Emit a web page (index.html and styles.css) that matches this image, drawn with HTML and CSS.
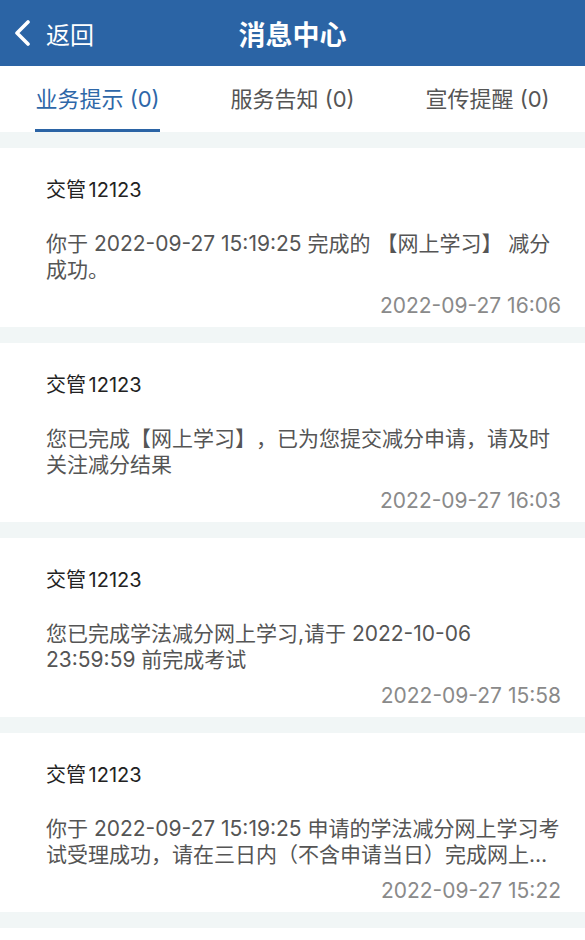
FILE: index.html
```html
<!DOCTYPE html>
<html lang="zh-CN">
<head>
    <meta charset="UTF-8">
    <meta name="viewport" content="width=device-width, initial-scale=1.0">
    <title>消息中心</title>
    <link rel="stylesheet" href="styles.css">
</head>
<body>

<!-- Barra superior -->
<header class="topbar">
    <a class="back" href="#">
        <svg class="back-icon" width="18" height="26" viewBox="0 0 18 26">
            <polyline points="15,2 4,13 15,24" fill="none" stroke="#fff" stroke-width="3.6" stroke-linecap="round" stroke-linejoin="round"/>
        </svg>
        <span>返回</span>
    </a>
    <h1 class="title">消息中心</h1>
    <div></div>
</header>

<!-- Pestañas -->
<nav class="tabs">
    <a class="tab active" href="#"><span>业务提示 (0)</span></a>
    <a class="tab" href="#"><span>服务告知 (0)</span></a>
    <a class="tab" href="#"><span>宣传提醒 (0)</span></a>
</nav>

<!-- Lista de mensajes -->
<main class="list">
    <div class="card">
        <div class="card-title">交管 12123</div>
        <div class="card-body">你于 2022-09-27 15:19:25 完成的 【网上学习】 减分成功。</div>
        <div class="card-time">2022-09-27 16:06</div>
    </div>
    <div class="card">
        <div class="card-title">交管 12123</div>
        <div class="card-body">您已完成【网上学习】，已为您提交减分申请，请及时关注减分结果</div>
        <div class="card-time">2022-09-27 16:03</div>
    </div>
    <div class="card">
        <div class="card-title">交管 12123</div>
        <div class="card-body">您已完成学法减分网上学习,请于 2022-10-06 23:59:59 前完成考试</div>
        <div class="card-time">2022-09-27 15:58</div>
    </div>
    <div class="card">
        <div class="card-title">交管 12123</div>
        <div class="card-body clamp">你于 2022-09-27 15:19:25 申请的学法减分网上学习考试受理成功，请在三日内（不含申请当日）完成网上学习考试，逾期将视为放弃</div>
        <div class="card-time">2022-09-27 15:22</div>
    </div>
</main>

</body>
</html>
```
FILE: styles.css
```css
body {
    margin: 0;
    font-family: Inter, "Noto Sans CJK SC", sans-serif;
    background-color: #fff;
    color: #222;
    text-spacing-trim: space-all;
}
a {
    text-decoration: none;
}
.topbar {
    display: grid;
    grid-template-columns: 1fr auto 1fr;
    align-items: center;
    height: 66px;
    background-color: #2b64a5;
    color: #fff;
}
.back {
    display: flex;
    align-items: center;
    gap: 15px;
    padding-left: 13px;
    color: #fff;
    font-size: 24px;
}
.back-icon {
    display: block;
}
.title {
    margin: 0;
    font-size: 27px;
    font-weight: bold;
}
.tabs {
    display: flex;
    height: 66px;
    background-color: #fff;
}
.tab {
    flex: 1;
    text-align: center;
    color: #555;
    font-size: 22px;
}
.tab span {
    display: inline-block;
    line-height: 30px;
    padding: 18px 0 15px;
    border-bottom: 3px solid transparent;
}
.tab.active {
    color: #2e67a8;
}
.tab.active span {
    border-bottom-color: #2b64a5;
}
.list {
    display: flex;
    flex-direction: column;
    gap: 16px;
    padding: 16px 0;
    background-color: #f1f6f6;
}
.card {
    background-color: #fff;
    padding: 28px 24px 8px 46px;
}
.card-title {
    font-size: 20px;
    line-height: 28px;
    color: #222;
    word-spacing: -3px;
}
.card-body {
    margin-top: 27px;
    margin-right: -2px;
    font-size: 21px;
    line-height: 26px;
    color: #555;
}
.clamp {
    display: -webkit-box;
    -webkit-box-orient: vertical;
    -webkit-line-clamp: 2;
    overflow: hidden;
}
.card-time {
    margin-top: 10px;
    font-size: 21px;
    line-height: 26px;
    text-align: right;
    color: #8a8a8a;
}
```
